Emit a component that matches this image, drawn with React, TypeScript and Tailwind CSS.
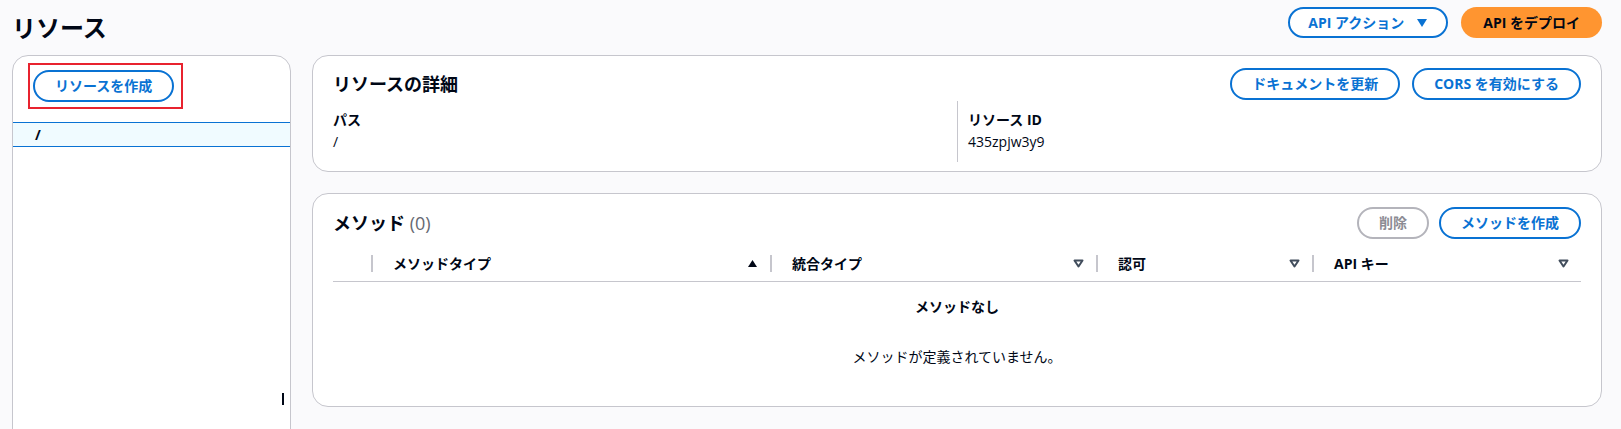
import type { ReactNode } from 'react'

const FONT = { fontFamily: '"Open Sans", "Noto Sans CJK JP", sans-serif' }

function OutlineButton({ children, disabled }: { children: ReactNode; disabled?: boolean }) {
  return (
    <button
      className={`h-[32px] px-[20px] rounded-full border-2 text-[14px] font-bold leading-none whitespace-nowrap ${
        disabled ? 'border-[#b4b4bb] text-[#8c8c94] bg-white' : 'border-[#0972d3] text-[#0972d3] bg-white'
      }`}
    >
      {children}
    </button>
  )
}

function SortDown() {
  return (
    <svg width="11" height="9" viewBox="0 0 11 9" className="shrink-0">
      <path d="M1.5 1.5 L9.5 1.5 L5.5 7.5 Z" fill="none" stroke="#414d5c" strokeWidth="2" strokeLinejoin="round" />
    </svg>
  )
}

function SortUp() {
  return (
    <svg width="11" height="9" viewBox="0 0 11 9" className="shrink-0">
      <path d="M5.5 1 L10 8 L1 8 Z" fill="#000716" />
    </svg>
  )
}

function HeaderCell({ label, sorted, width }: { label: string; sorted?: boolean; width: string }) {
  return (
    <div className={`flex items-center ${width}`}>
      <div className="w-[2px] h-[17px] bg-[#c6c6cd]" />
      <div className="flex-1 flex items-center justify-between pl-[20px] pr-[12px]">
        <span className="text-[14px] font-bold text-[#000716]">{label}</span>
        {sorted ? <SortUp /> : <SortDown />}
      </div>
    </div>
  )
}

export default function App() {
  return (
    <div className="w-[1621px] h-[429px] overflow-hidden bg-[#fafafc] text-[#000716]" style={FONT}>
      {/* Header */}
      <div className="flex items-start justify-between pl-[12px] pr-[19px] pt-[7px] h-[55px]">
        <h1 className="text-[24px] font-bold leading-[32px] mt-[5px]">リソース</h1>
        <div className="flex gap-[13px]">
          <button className="h-[31px] px-[18px] rounded-full border-2 border-[#0972d3] text-[#0972d3] bg-white text-[14px] font-bold flex items-center gap-[12px]">
            API アクション
            <svg width="12" height="10" viewBox="0 0 12 10">
              <path d="M1 1 L11 1 L6 9 Z" fill="#0972d3" />
            </svg>
          </button>
          <button className="h-[31px] px-[22px] rounded-full bg-[#ff9530] text-[#000716] text-[14px] font-bold">
            API をデプロイ
          </button>
        </div>
      </div>

      <div className="flex gap-[21px] pl-[12px] pr-[19px]">
        {/* Resource tree */}
        <div className="relative w-[279px] h-[390px] shrink-0 bg-white border border-[#c6c6cd] rounded-t-[16px]">
          <div className="pt-[7px] pl-[15px]">
            <div className="inline-flex border-2 border-[#e8232f] pl-[3px] pr-[7px] py-[5px]">
              <OutlineButton>リソースを作成</OutlineButton>
            </div>
          </div>
          <div className="mt-[13px] h-[25px] bg-[#f0fbff] border-y border-[#0972d3] flex items-center pl-[22px]">
            <span className="text-[14px] font-bold">/</span>
          </div>
          <div className="absolute left-[269px] top-[337px] w-[2px] h-[12px] bg-[#000716]" />
        </div>

        {/* Right column */}
        <div className="flex-1 flex flex-col gap-[21px]">
          {/* Resource details */}
          <div className="h-[117px] bg-white border border-[#c6c6cd] rounded-[16px] px-[20px] pt-[12px]">
            <div className="flex items-center justify-between">
              <h2 className="text-[18px] font-bold leading-[32px]">リソースの詳細</h2>
              <div className="flex gap-[12px]">
                <OutlineButton>ドキュメントを更新</OutlineButton>
                <OutlineButton>CORS を有効にする</OutlineButton>
              </div>
            </div>
            <div className="grid grid-cols-2 mt-[1px]">
              <div className="pt-[8px] h-[61px]">
                <div className="text-[14px] font-bold leading-[22px]">パス</div>
                <div className="text-[14px] leading-[22px]">/</div>
              </div>
              <div className="pt-[8px] h-[61px] border-l border-[#c6c6cd] pl-[10px]">
                <div className="text-[14px] font-bold leading-[22px]">リソース ID</div>
                <div className="text-[14px] leading-[22px]">435zpjw3y9</div>
              </div>
            </div>
          </div>

          {/* Methods */}
          <div className="h-[214px] bg-white border border-[#c6c6cd] rounded-[16px] px-[20px] pt-[13px]">
            <div className="flex items-center justify-between">
              <h2 className="text-[18px] font-bold leading-[32px]">
                メソッド <span className="font-normal text-[#656871]">(0)</span>
              </h2>
              <div className="flex gap-[10px]">
                <OutlineButton disabled>削除</OutlineButton>
                <OutlineButton>メソッドを作成</OutlineButton>
              </div>
            </div>
            <div className="flex items-center h-[37px] mt-[6px] border-b border-[#c6c6cd]">
              <div className="w-[38px]" />
              <HeaderCell label="メソッドタイプ" sorted width="w-[399px]" />
              <HeaderCell label="統合タイプ" width="w-[326px]" />
              <HeaderCell label="認可" width="w-[216px]" />
              <HeaderCell label="API キー" width="flex-1" />
            </div>
            <div className="flex flex-col items-center">
              <div className="text-[14px] font-bold leading-[22px] mt-[14px]">メソッドなし</div>
              <div className="text-[14px] leading-[22px] mt-[28px]">メソッドが定義されていません。</div>
            </div>
          </div>
        </div>
      </div>
    </div>
  )
}
